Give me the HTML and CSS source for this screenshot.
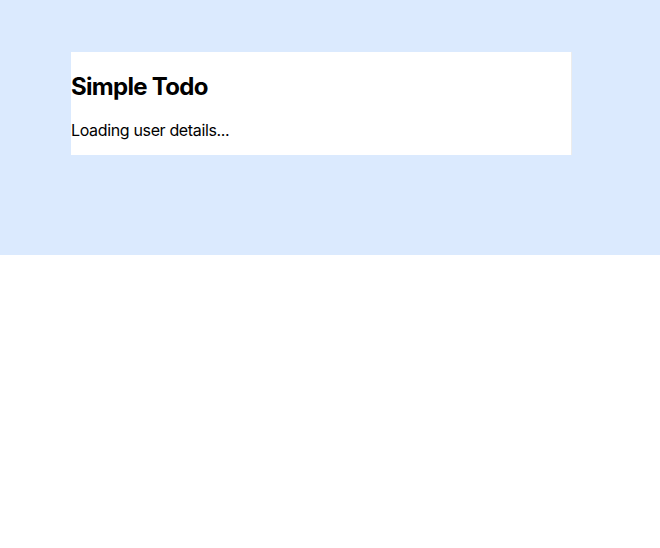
FILE: index.html
```html
<!DOCTYPE html>
<html lang="en">
<head>
<meta charset="utf-8">
<title>Simple Todo</title>
<link rel="stylesheet" href="styles.css">
</head>
<body>
<div class="hero">
  <div class="card">
    <h1 class="title">Simple Todo</h1>
    <p class="status">Loading user details...</p>
  </div>
</div>
</body>
</html>
```
FILE: styles.css
```css
html, body {
  margin: 0;
  padding: 0;
  background: #ffffff;
  font-family: Inter, "Noto Sans", sans-serif;
  color: #000000;
}
.hero {
  background: #dbeafe;
  height: 255px;
  box-sizing: border-box;
  padding: 52px 0 0 71px;
}
.card {
  width: 501px;
  box-sizing: border-box;
  background: #ffffff;
  border-right: 1px solid #ececec;
  padding: 20px 0 15px 0;
}
.title {
  margin: 0 0 19px 0;
  font-size: 24px;
  font-weight: 700;
  line-height: normal;
  letter-spacing: -0.7px;
}
.status {
  margin: 0;
  font-size: 16px;
  line-height: normal;
  letter-spacing: -0.35px;
}
```
